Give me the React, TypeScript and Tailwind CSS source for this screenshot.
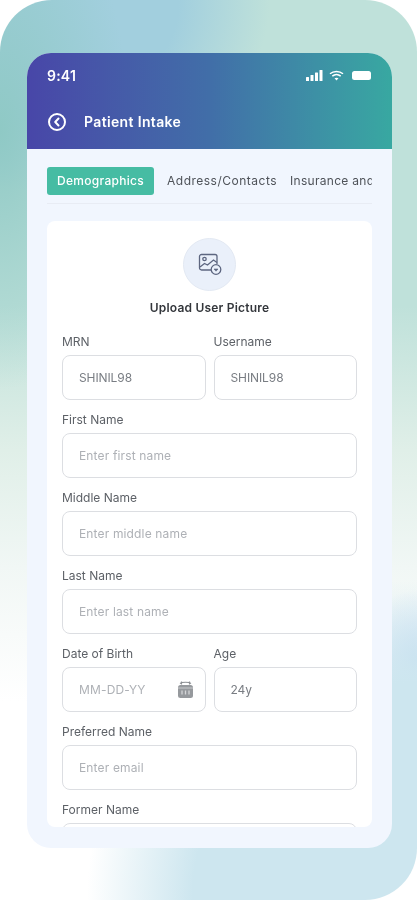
const font = { fontFamily: 'Inter, "Open Sans", sans-serif' };

function Field({ label, placeholder, value, calendar }: { label: string; placeholder?: string; value?: string; calendar?: boolean }) {
  return (
    <div className="flex-1 min-w-0">
      <div className="h-[20px] leading-[22px] text-[12px] text-[#5d6167]">{label}</div>
      <div className="mt-[4px] h-[45px] rounded-lg border border-[#dcdee2] bg-white pl-[16px] pr-[11px] flex items-center justify-between text-[12px] tracking-[0.15px]">
        {value && <span className="text-[#797d83] tracking-[-0.1px]">{value}</span>}
        {placeholder && <span className="text-[#aeb1b6]">{placeholder}</span>}
        {calendar && <CalendarIcon />}
      </div>
    </div>
  );
}

function CalendarIcon() {
  return (
    <svg width="17" height="19" viewBox="0 0 17 19" fill="none">
      <path d="M3 3.5C5 1.8 12 1.8 14 3.5" stroke="#8d9094" strokeWidth="1.2" />
      <path d="M4.5 1.5v3M12.5 1.5v3" stroke="#8d9094" strokeWidth="1.2" />
      <rect x="1" y="5" width="15" height="13" rx="2.5" fill="#96999d" />
      <path d="M1 8h15" stroke="#c9cbcd" strokeWidth="1" />
      <path d="M5 10.5v4M8.5 10.5v4M12 10.5v4" stroke="#d5d6d8" strokeWidth="1.3" />
    </svg>
  );
}

function UploadIcon() {
  return (
    <svg width="24" height="23" viewBox="0 0 24 23" fill="none" stroke="#5d6680" strokeWidth="1.3">
      <path d="M13 17H3.5A2 2 0 0 1 1.5 15V3.5a2 2 0 0 1 2-2h13.5a2 2 0 0 1 2 2V11" />
      <circle cx="6.5" cy="6" r="1.7" />
      <path d="M2 14l4.5-3.5 3 1.5 6-5 3.5 2.5" />
      <circle cx="18" cy="16.5" r="4.8" />
      <path d="M16 16h4l-2 2.2z" fill="#5d6680" strokeWidth="0.6" />
    </svg>
  );
}

export default function App() {
  return (
    <div style={font} className="w-[417px] h-[900px] bg-white overflow-hidden blur-[0.35px]">
      <div className="h-[900px] rounded-[52px] pt-[53px] px-[27px] bg-[radial-gradient(ellipse_330px_320px_at_100%_100%,#cde6ef_0,#cde6ef_68%,rgba(205,230,239,0)_100%),radial-gradient(ellipse_60px_70px_at_100%_660px,#c5dcf3_0,rgba(197,220,243,0)_100%),radial-gradient(ellipse_130px_260px_at_0_130px,#8fc9c5_0,rgba(143,201,197,0)_100%),radial-gradient(ellipse_240px_190px_at_30px_0,#a2cfde_0,#a2cfde_62%,rgba(162,207,222,0)_100%),linear-gradient(180deg,#bfe1da_0%,#bfe1da_34%,#e0efe8_50%,#f1f7f5_63%,#ffffff_78%,#ffffff_100%)]">
        <div className="relative h-[795px] w-[365px] rounded-[24px] overflow-hidden bg-[#f1f6fe] flex flex-col">
          <div className="h-[96px] shrink-0 bg-gradient-to-r from-[#4846a8] via-[#416ea8] to-[#38a8a1] text-white">
            <div className="h-[44px] pl-[20px] pr-[21px] flex items-center justify-between pt-[1px]">
              <span className="text-[14px] font-semibold tracking-[0.2px]">9:41</span>
              <div className="flex items-center gap-[6px]">
                <svg width="17" height="11" viewBox="0 0 17 11" fill="white">
                  <rect x="0" y="7" width="3" height="4" rx="0.5" />
                  <rect x="4.5" y="5" width="3" height="6" rx="0.5" />
                  <rect x="9" y="2.5" width="3" height="8.5" rx="0.5" />
                  <rect x="13.5" y="0" width="3" height="11" rx="0.5" />
                </svg>
                <svg width="15" height="11" viewBox="0 0 15 11" fill="none" stroke="white" strokeWidth="1.5">
                  <path d="M1 3.8C4.6.6 10.4.6 14 3.8" />
                  <path d="M3.3 6.1c2.4-2 6-2 8.4 0" />
                  <path d="M7.5 10.5L5.5 8.3c1.2-.9 2.8-.9 4 0z" fill="white" stroke="none" />
                </svg>
                <div className="ml-[2px] w-[19px] h-[9px] rounded-[2.5px] bg-white" />
              </div>
            </div>
            <div className="flex items-center pl-[21px] mt-[14px]">
              <div className="w-[18px] h-[18px] rounded-full border-2 border-white flex items-center justify-center">
                <svg width="8" height="10" viewBox="0 0 8 10" fill="none" stroke="white" strokeWidth="2" strokeLinecap="round" strokeLinejoin="round">
                  <path d="M5.5 1.5L2.2 5l3.3 3.5" />
                </svg>
              </div>
              <span className="ml-[18px] text-[14px] font-semibold tracking-[0.35px]">Patient Intake</span>
            </div>
          </div>

          <div className="flex-1 min-h-0 px-[20px] pt-[18px]">
            <div className="flex items-center h-[28px] overflow-hidden whitespace-nowrap text-[12px] tracking-[0.3px] text-[#4f5359]">
              <div className="h-[28px] w-[107px] shrink-0 rounded-[3px] bg-[#46bca3] text-white font-medium flex items-center justify-center">Demographics</div>
              <span className="ml-[13px] shrink-0 w-[110px] tracking-[0.5px]">Address/Contacts</span>
              <span className="ml-[13px] shrink-0">Insurance and Billing</span>
            </div>
            <div className="mt-[8px] h-px bg-[#e8ecf4]" />
            <div className="mt-[17px] h-[606px] rounded-lg bg-white overflow-hidden px-[15px] pt-[17px]">
              <div className="flex flex-col items-center">
                <div className="w-[53px] h-[53px] rounded-full bg-[#eaf0fa] border border-[#e2e8f2] flex items-center justify-center">
                  <UploadIcon />
                </div>
                <div className="mt-[9px] h-[16px] leading-[16px] text-[12px] font-semibold tracking-[0.2px] text-[#33363b]">Upload User Picture</div>
              </div>
              <div className="mt-[15px] flex flex-col gap-[9px]">
                <div className="flex gap-[8px]">
                  <Field label="MRN" value="SHINIL98" />
                  <Field label="Username" value="SHINIL98" />
                </div>
                <Field label="First Name" placeholder="Enter first name" />
                <Field label="Middle Name" placeholder="Enter middle name" />
                <Field label="Last Name" placeholder="Enter last name" />
                <div className="flex gap-[8px]">
                  <Field label="Date of Birth" placeholder="MM-DD-YY" calendar />
                  <Field label="Age" value="24y" />
                </div>
                <Field label="Preferred Name" placeholder="Enter email" />
                <Field label="Former Name" />
              </div>
            </div>
          </div>
        </div>
      </div>
    </div>
  );
}
